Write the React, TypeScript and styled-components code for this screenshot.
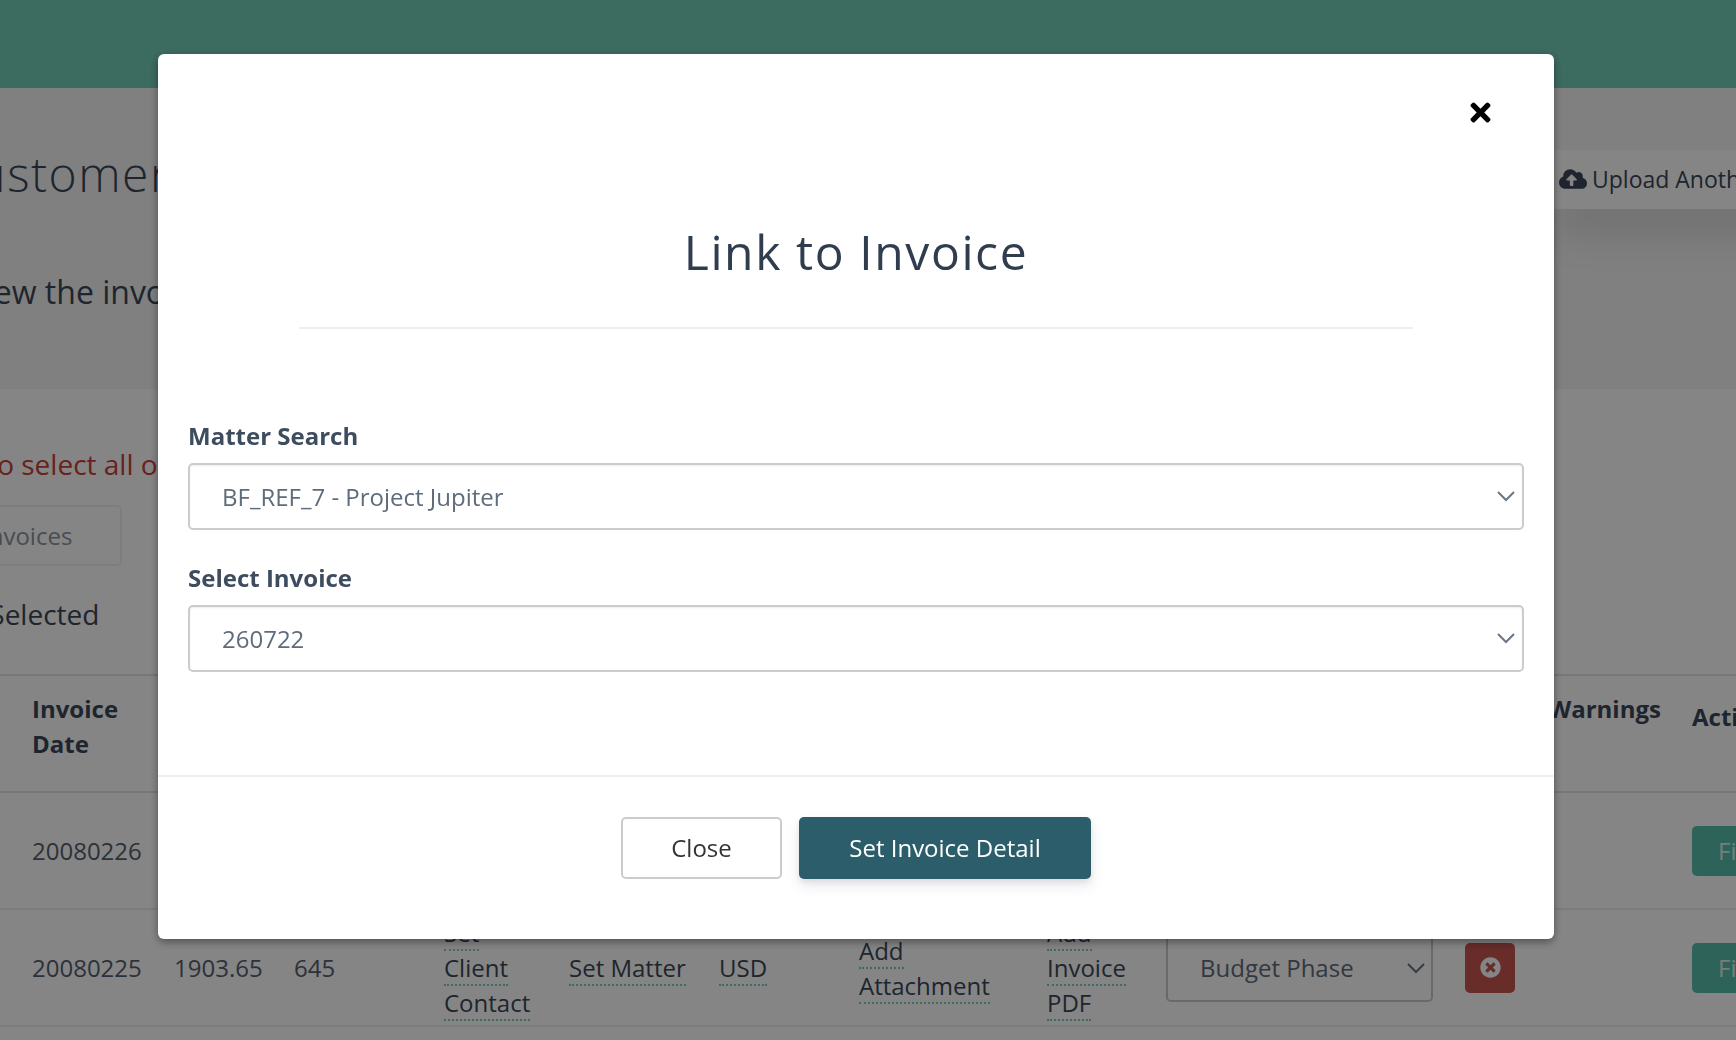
import React from "react";
import styled, { createGlobalStyle } from "styled-components";
import { FaTimes, FaCloudUploadAlt, FaTimesCircle } from "react-icons/fa";

const Global = createGlobalStyle`
  html, body { margin: 0; padding: 0; height: 100%; overflow: hidden; background: #fff; }
  body { font-family: "Open Sans", "Noto Sans", sans-serif; color: #3c4858; }
  * { box-sizing: border-box; }
`;

const Page = styled.div`
  width: 1736px;
  height: 1040px;
  overflow: hidden;
`;
const Nav = styled.div`
  height: 88px;
  background: #73cdb7;
`;
const Hero = styled.div`
  height: 301px;
  background: #f5f5f5;
  display: flex;
  flex-direction: column;
  position: relative;
`;
const Heading = styled.h1`
  margin: 53px 0 0 -54px;
  font-size: 48px;
  line-height: 66px;
  font-weight: 300;
  letter-spacing: 1.5px;
  white-space: nowrap;
  color: #3c4858;
`;
const Lead = styled.p`
  margin: 64px 0 0 -68px;
  font-size: 32px;
  line-height: 42px;
  white-space: nowrap;
  color: #3c4858;
`;
const UploadButton = styled.div`
  position: absolute;
  left: 1540px;
  top: 62px;
  width: 260px;
  height: 59px;
  display: flex;
  align-items: center;
  gap: 5px;
  padding: 0 0 2px 19px;
  background: #fff;
  font-size: 23px;
  color: #3c4858;
  white-space: nowrap;
  box-shadow: 0 34px 44px -14px rgba(0, 0, 0, 0.16);
`;
const Filters = styled.div`
  height: 285px;
  display: flex;
  flex-direction: column;
`;
const Notice = styled.div`
  margin: 55px 0 0 -80px;
  font-size: 28px;
  line-height: 40px;
  color: #c8423a;
  white-space: nowrap;
`;
const SearchBox = styled.div`
  margin: 21px 0 0 -38px;
  width: 160px;
  height: 61px;
  display: flex;
  align-items: center;
  padding-left: 18px;
  border: 2px solid #f0f0f0;
  border-radius: 5px;
  font-size: 24px;
  color: #8b95a1;
  white-space: nowrap;
`;
const SelectedLabel = styled.div`
  margin: 28px 0 0 -34px;
  font-size: 28px;
  line-height: 40px;
  white-space: nowrap;
`;
const Table = styled.table`
  table-layout: fixed;
  width: 1800px;
  border-collapse: collapse;
  font-size: 24px;
  line-height: 35px;
`;
const Col = styled.col<{ $w: number }>`
  width: ${(p) => p.$w}px;
`;
const HeadRow = styled.tr`
  height: 117px;
  border-top: 2px solid #e4e4e4;
  border-bottom: 2px solid #e4e4e4;
`;
const Th = styled.th<{ $top?: number }>`
  padding: ${(p) => p.$top ?? 15}px 16px 0;
  vertical-align: top;
  text-align: left;
  font-weight: 700;
  white-space: nowrap;
  color: #3c4858;
  &:first-child {
    padding-left: 32px;
  }
`;
const WarningsLabel = styled.span`
  padding-left: 83px;
`;
const Row = styled.tr`
  height: 117px;
  border-bottom: 2px solid #eeeeee;
`;
const Td = styled.td`
  padding: 0 16px;
  vertical-align: middle;
  color: #56616f;
  &:first-child {
    padding-left: 32px;
  }
`;
const DottedLink = styled.span`
  color: #3c4858;
  border-bottom: 2px dotted #73cdb7;
`;
const BudgetSelect = styled.div`
  width: 267px;
  height: 68px;
  display: flex;
  align-items: center;
  justify-content: space-between;
  padding: 0 5px 0 32px;
  border: 2px solid #c9c9c9;
  border-radius: 5px;
  color: #5f6c7b;
`;
const DeleteButton = styled.div`
  width: 50px;
  height: 50px;
  display: flex;
  align-items: center;
  justify-content: center;
  border-radius: 5px;
  background: #c75550;
  color: #fff;
  font-size: 21px;
`;
const FixButton = styled.div`
  width: 120px;
  height: 50px;
  display: flex;
  align-items: center;
  padding-left: 26px;
  border-radius: 5px;
  background: #58bfad;
  color: #e2efec;
`;

const Overlay = styled.div`
  position: fixed;
  inset: 0;
  background: rgba(0, 0, 0, 0.48);
  padding-top: 54px;
`;
const Modal = styled.div`
  position: relative;
  width: 1396px;
  height: 885px;
  margin-left: 158px;
  background: #fff;
  border-radius: 6px;
  box-shadow: 0 3px 9px rgba(0, 0, 0, 0.4);
  display: flex;
  flex-direction: column;
`;
const CloseIcon = styled.div`
  position: absolute;
  left: 1308px;
  top: 44px;
  color: #000;
  display: flex;
  font-size: 29px;
`;
const ModalHeader = styled.div`
  padding-top: 168px;
  display: flex;
  flex-direction: column;
  align-items: center;
`;
const Title = styled.h2`
  margin: 0;
  font-size: 48px;
  line-height: 60px;
  font-weight: 400;
  letter-spacing: 1.6px;
  color: #2f3d4f;
`;
const Rule = styled.div`
  width: 1114px;
  height: 2px;
  margin-top: 45px;
  background: #eeeeee;
`;
const ModalBody = styled.div`
  flex: 1;
  padding: 91px 30px 0;
`;
const Label = styled.div<{ $gap?: number }>`
  margin-top: ${(p) => p.$gap ?? 0}px;
  margin-bottom: 11px;
  font-size: 24px;
  line-height: 32px;
  font-weight: 700;
  color: #3d4c5f;
`;
const SelectBox = styled.div`
  height: 67px;
  display: flex;
  align-items: center;
  justify-content: space-between;
  padding: 0 6px 1px 32px;
  border: 2px solid #cccccc;
  border-radius: 5px;
  box-shadow: inset 0 1px 2px rgba(0, 0, 0, 0.08);
  font-size: 24px;
  color: #5f6c7b;
`;
const ModalFooter = styled.div`
  height: 164px;
  border-top: 2px solid #eeeeee;
  padding-top: 40px;
  display: flex;
  justify-content: center;
  gap: 17px;
`;
const CloseButton = styled.div`
  width: 161px;
  height: 62px;
  display: flex;
  align-items: center;
  justify-content: center;
  padding-bottom: 2px;
  border: 2px solid #cccccc;
  border-radius: 5px;
  font-size: 24px;
  color: #333333;
`;
const PrimaryButton = styled.div`
  width: 292px;
  height: 62px;
  display: flex;
  align-items: center;
  justify-content: center;
  padding-bottom: 2px;
  border-radius: 5px;
  background: #2b5e6a;
  box-shadow: 0 7px 14px rgba(50, 50, 93, 0.1), 0 3px 6px rgba(0, 0, 0, 0.08);
  font-size: 24px;
  color: #fff;
`;

const Chevron = () => (
  <svg width="20" height="12" viewBox="0 0 20 12" fill="none" stroke="#6b7684" strokeWidth="2">
    <path d="M2 2l8 8 8-8" />
  </svg>
);

const widths = [158, 120, 150, 125, 150, 140, 188, 119, 299, 227, 124];

const Columns = () => (
  <colgroup>
    {widths.map((w, i) => (
      <Col key={i} $w={w} />
    ))}
  </colgroup>
);

const InvoiceRow = ({ date, amount, hours }: { date: string; amount: string; hours: string }) => (
  <Row>
    <Td>{date}</Td>
    <Td>{amount}</Td>
    <Td>{hours}</Td>
    <Td>
      <DottedLink>Set</DottedLink>
      <br />
      <DottedLink>Client</DottedLink>
      <br />
      <DottedLink>Contact</DottedLink>
    </Td>
    <Td>
      <DottedLink>Set Matter</DottedLink>
    </Td>
    <Td>
      <DottedLink>USD</DottedLink>
    </Td>
    <Td>
      <DottedLink>Add</DottedLink>
      <br />
      <DottedLink>Attachment</DottedLink>
    </Td>
    <Td>
      <DottedLink>Add</DottedLink>
      <br />
      <DottedLink>Invoice</DottedLink>
      <br />
      <DottedLink>PDF</DottedLink>
    </Td>
    <Td>
      <BudgetSelect>
        Budget Phase
        <Chevron />
      </BudgetSelect>
    </Td>
    <Td>
      <DeleteButton>
        <FaTimesCircle />
      </DeleteButton>
    </Td>
    <Td>
      <FixButton>Fix</FixButton>
    </Td>
  </Row>
);

export default function App() {
  return (
    <>
      <Global />
      <Page>
        <Nav />
        <Hero>
          <Heading>Customer Invoices</Heading>
          <Lead>Review the invoices below</Lead>
          <UploadButton>
            <FaCloudUploadAlt size={28} />
            Upload Another
          </UploadButton>
        </Hero>
        <Filters>
          <Notice>Click to select all of the invoices</Notice>
          <SearchBox>Invoices</SearchBox>
          <SelectedLabel>0 Selected</SelectedLabel>
        </Filters>
        <Table>
          <Columns />
          <thead>
            <HeadRow>
              <Th>
                Invoice
                <br />
                Date
              </Th>
              <Th>Amount</Th>
              <Th>Hours</Th>
              <Th>Client</Th>
              <Th>Matter</Th>
              <Th>Currency</Th>
              <Th>Attachment</Th>
              <Th>PDF</Th>
              <Th>Phase</Th>
              <Th>
                <WarningsLabel>Warnings</WarningsLabel>
              </Th>
              <Th $top={23}>Actions</Th>
            </HeadRow>
          </thead>
          <tbody>
            <InvoiceRow date="20080226" amount="1903.65" hours="645" />
            <InvoiceRow date="20080225" amount="1903.65" hours="645" />
          </tbody>
        </Table>
      </Page>
      <Overlay>
        <Modal>
          <CloseIcon>
            <FaTimes />
          </CloseIcon>
          <ModalHeader>
            <Title>Link to Invoice</Title>
            <Rule />
          </ModalHeader>
          <ModalBody>
            <Label>Matter Search</Label>
            <SelectBox>
              BF_REF_7 - Project Jupiter
              <Chevron />
            </SelectBox>
            <Label $gap={32}>Select Invoice</Label>
            <SelectBox>
              260722
              <Chevron />
            </SelectBox>
          </ModalBody>
          <ModalFooter>
            <CloseButton>Close</CloseButton>
            <PrimaryButton>Set Invoice Detail</PrimaryButton>
          </ModalFooter>
        </Modal>
      </Overlay>
    </>
  );
}
